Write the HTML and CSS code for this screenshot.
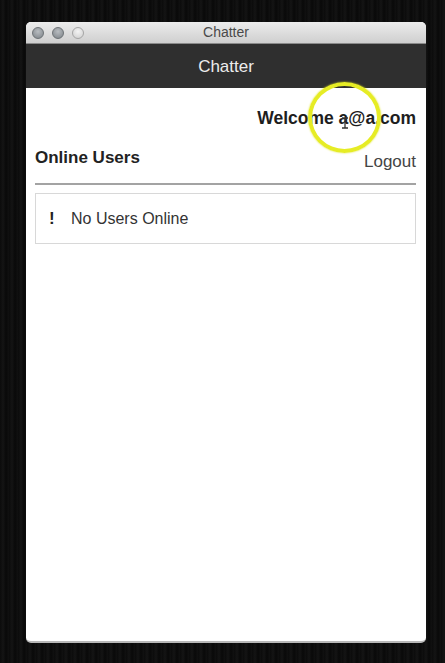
FILE: index.html
```html
<!DOCTYPE html>
<html>
<head>
<meta charset="utf-8">
<link rel="stylesheet" href="styles.css">
</head>
<body>
<div class="desktop">
  <div class="window">
    <div class="titlebar">
      <div class="lights">
        <span class="light"></span>
        <span class="light"></span>
        <span class="light light-off"></span>
      </div>
      <div class="wintitle">Chatter</div>
    </div>
    <div class="header">Chatter</div>
    <div class="content">
      <div class="welcome">Welcome a@a.com</div>
      <div class="bar">
        <div class="online">Online Users</div>
        <div class="logout">Logout</div>
      </div>
      <div class="rule"></div>
      <div class="notice">
        <span class="bang">!</span>
        <span class="notice-text">No Users Online</span>
      </div>
    </div>
    <div class="highlight"></div>
    <svg class="ibeam" width="8" height="12" viewBox="0 0 8 12"><path d="M1 1h6M4 1v10M1 11h6" stroke="#333" stroke-width="1.3" fill="none"/></svg>
  </div>
</div>
</body>
</html>
```
FILE: styles.css
```css
html, body {
  margin: 0;
  padding: 0;
  width: 445px;
  height: 663px;
  overflow: hidden;
  background: #0c0c0c;
  font-family: "Liberation Sans", Arial, sans-serif;
}
.desktop {
  width: 445px;
  height: 663px;
  box-sizing: border-box;
  padding: 22px 19px 20px 26px;
  background: repeating-linear-gradient(90deg, #0b0b0b 0, #141414 3px, #090909 6px, #111 9px);
}
.window {
  position: relative;
  width: 400px;
  height: 621px;
  display: flex;
  flex-direction: column;
  border-radius: 5px;
  overflow: hidden;
  background: #fff;
  border-bottom: 2px solid #b8b8b8;
  box-sizing: border-box;
}
.titlebar {
  height: 22px;
  flex: none;
  position: relative;
  background: linear-gradient(#ececec, #cfcfcf);
  border-bottom: 1px solid #8a8a8a;
  box-sizing: border-box;
  display: flex;
  align-items: center;
}
.lights {
  display: flex;
  gap: 8px;
  padding-left: 6px;
}
.light {
  width: 12px;
  height: 12px;
  border-radius: 50%;
  box-sizing: border-box;
  background: radial-gradient(circle at 50% 35%, #b8bcc0, #7d8388);
  border: 1px solid #6d7276;
}
.light-off {
  background: radial-gradient(circle at 50% 35%, #f4f4f4, #cdcdcd);
  border-color: #a5a5a5;
}
.wintitle {
  position: absolute;
  left: 0;
  right: 0;
  top: 0;
  line-height: 21px;
  text-align: center;
  font-size: 14px;
  color: #4a4a4a;
}
.header {
  height: 44px;
  flex: none;
  background: #2f2f2f;
  color: #ececec;
  font-size: 17px;
  text-align: center;
  line-height: 45px;
}
.content {
  flex: 1;
  padding: 20px 10px 0 9px;
}
.welcome {
  text-align: right;
  font-size: 17.5px;
  font-weight: bold;
  color: #1e1e1e;
  line-height: 20px;
}
.bar {
  display: flex;
  justify-content: space-between;
  align-items: flex-start;
  margin-top: 19px;
}
.online {
  font-size: 17px;
  font-weight: bold;
  color: #222;
  line-height: 22px;
}
.logout {
  font-size: 17px;
  color: #444;
  line-height: 20px;
  padding-top: 5px;
}
.rule {
  height: 2px;
  background: #a3a3a3;
  margin-top: 11px;
}
.notice {
  margin-top: 8px;
  height: 51px;
  border: 1px solid #d8d8d8;
  box-sizing: border-box;
  display: flex;
  align-items: center;
  padding-left: 13px;
}
.bang {
  font-weight: bold;
  font-size: 17px;
  color: #222;
  width: 22px;
}
.notice-text {
  font-size: 16px;
  color: #333;
}
.highlight {
  position: absolute;
  left: 282px;
  top: 60px;
  width: 73px;
  height: 71px;
  border-radius: 50%;
  border: 4px solid #e6ec25;
  box-sizing: border-box;
  box-shadow: 0 0 2px #dde21f;
}
.ibeam {
  position: absolute;
  left: 315px;
  top: 95px;
}
```
